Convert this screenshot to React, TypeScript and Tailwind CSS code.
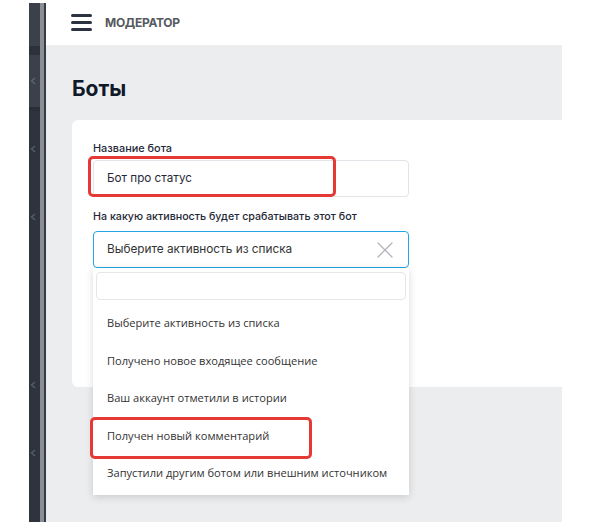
import { X } from "lucide-react";

const options = [
  "Выберите активность из списка",
  "Получено новое входящее сообщение",
  "Ваш аккаунт отметили в истории",
  "Получен новый комментарий",
  "Запустили другим ботом или внешним источником",
];

const Chevron = () => (
  <svg width="6" height="8" viewBox="0 0 6 8" className="opacity-40">
    <path d="M5 1 L1.5 4 L5 7" stroke="#9aa0aa" strokeWidth="1.3" fill="none" />
  </svg>
);

const Sidebar = () => (
  <div className="mt-[3px] mb-[7px] flex w-[17px] shrink-0">
    <div className="flex w-[11px] flex-col">
      <div className="h-[43px] bg-[#3b404b]" />
      <div className="h-[9px] bg-[#2c313a]" />
      <div className="flex h-[52px] flex-col items-start justify-center bg-[#3b404b] pl-px">
        <Chevron />
      </div>
      <div className="h-[4px] bg-[#2a2e37]" />
      <div className="flex flex-1 flex-col items-start gap-[60px] bg-[#2e333d] pl-px pt-[34px]">
        <Chevron />
        <Chevron />
        <div className="h-[40px]" />
        <Chevron />
        <Chevron />
      </div>
    </div>
    <div className="w-[4px] bg-[#8b8e95]" />
    <div className="w-[2px] bg-[#363b45]" />
  </div>
);

const Menu = () => (
  <div className="flex w-[21px] flex-col gap-[4px]">
    <div className="h-[3px] rounded-sm bg-[#2d3240]" />
    <div className="h-[3px] rounded-sm bg-[#2d3240]" />
    <div className="h-[3px] rounded-sm bg-[#2d3240]" />
  </div>
);

export default function App() {
  return (
    <div
      className="flex h-[529px] w-[591px] overflow-hidden bg-white"
      style={{ fontFamily: "Inter, 'Noto Sans', sans-serif" }}
    >
      <div className="w-[29px] shrink-0" />
      <Sidebar />
      <div className="flex w-[516px] shrink-0 flex-col">
        <header className="flex h-[45px] items-center gap-[13px] pl-[25px]">
          <Menu />
          <span className="text-[12px] font-bold tracking-[-0.3px] text-[#555a60]">МОДЕРАТОР</span>
        </header>
        <main className="mb-[7px] flex flex-1 flex-col bg-[#ecedef] pl-[26px]">
          <h1 className="mt-[32px] text-[21px] font-bold leading-[24px] text-[#111827]">Боты</h1>
          <section className="relative mt-[19px] h-[267px] rounded-l-md bg-white pl-[21px] pt-[21px]">
            <label className="block text-[10.9px] font-medium leading-[14px] text-[#1f2937]">
              Название бота
            </label>
            <div className="relative mt-[5px] w-[316px]">
              <div className="flex h-[37px] items-center rounded-sm border border-[#e1e4e9] pl-[13px] text-[11.7px] text-[#1f2937]">
                Бот про статус
              </div>
              <div className="absolute -left-[5px] -top-[4px] h-[41px] w-[248px] rounded-[5px] border-[3px] border-[#e53935]" />
            </div>
            <label className="mt-[13px] block text-[10.7px] font-medium leading-[14px] text-[#1f2937]">
              На какую активность будет срабатывать этот бот
            </label>
            <div className="relative mt-[7px] w-[316px]">
              <div className="flex h-[37px] items-center justify-between rounded-sm border border-[#22a7e6] pl-[13px] pr-[9px] text-[11.8px] text-[#333]">
                <span>Выберите активность из списка</span>
                <X size={28} strokeWidth={1.1} className="text-[#b0b4ba]" />
              </div>
              <div className="absolute left-0 top-[37px] z-10 w-[316px] bg-white px-[3px] pb-[2px] pt-[4px] shadow-[0_2px_8px_rgba(0,0,0,0.15)]">
                <div className="h-[28px] rounded-sm border border-[#e4e6ea]" />
                <ul className="mt-[5px]" style={{ fontFamily: "'Open Sans', 'Noto Sans', sans-serif" }}>
                  {options.map((o, i) => (
                    <li
                      key={i}
                      className="relative flex h-[37.5px] items-center whitespace-nowrap pl-[11px] text-[11.1px] text-[#333]"
                    >
                      {o}
                      {i === 3 && (
                        <div className="absolute -left-[6px] top-[-1px] h-[42px] w-[222px] rounded-[5px] border-[3px] border-[#e53935]" />
                      )}
                    </li>
                  ))}
                </ul>
              </div>
            </div>
            <div className="mt-[23px] h-[40px] w-[110px] rounded-md bg-[#d4ebfa]" />
          </section>
        </main>
      </div>
    </div>
  );
}
